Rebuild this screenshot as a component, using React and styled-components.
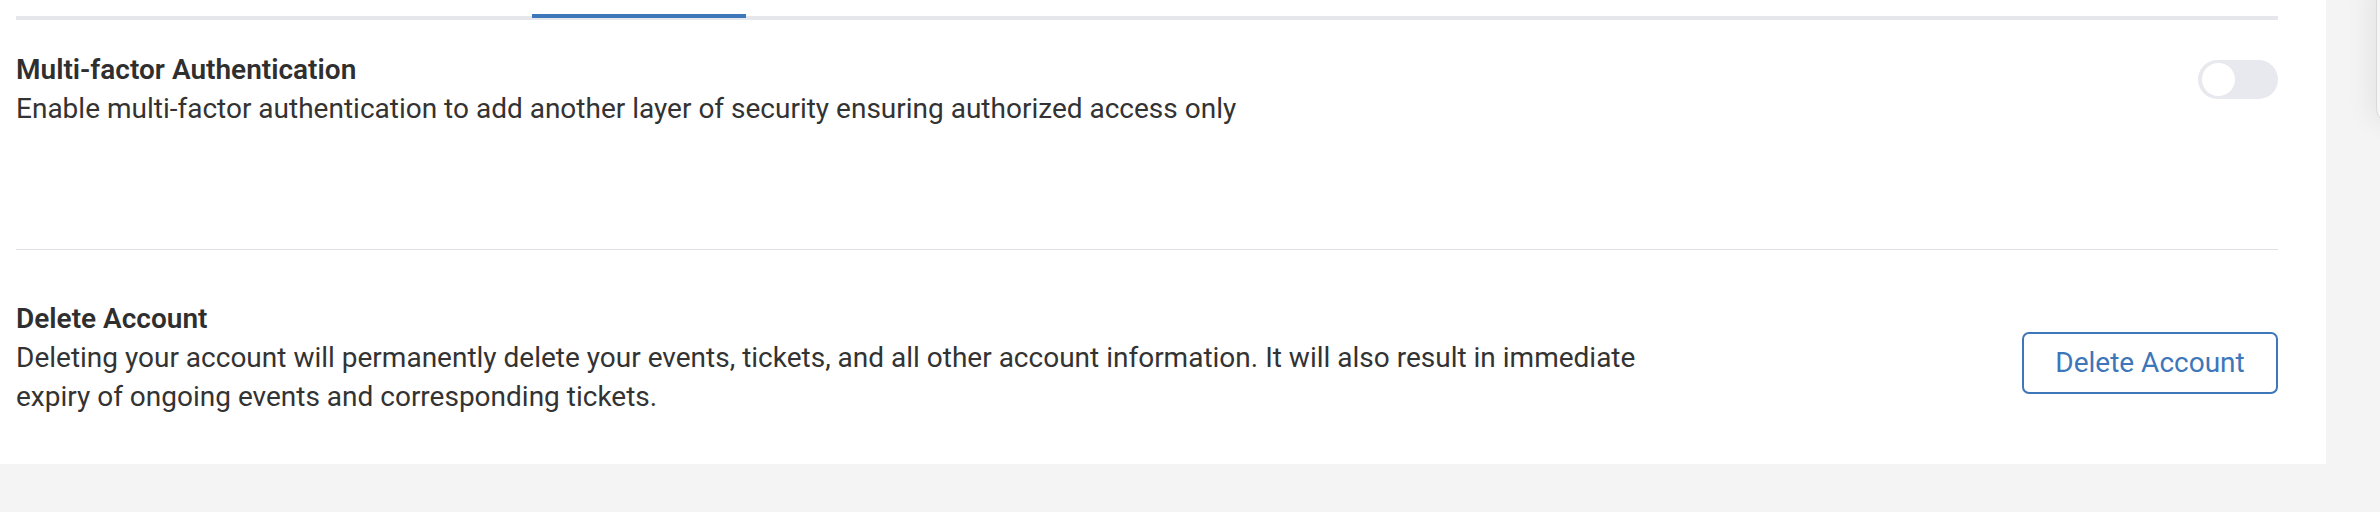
import React, { useState } from "react";
import styled, { createGlobalStyle } from "styled-components";

const GlobalStyle = createGlobalStyle`
  html, body {
    margin: 0;
    padding: 0;
    background: #f4f4f4;
    font-family: Roboto, "Liberation Sans", Arial, sans-serif;
    color: #333333;
  }
  #root {
    position: relative;
    height: 512px;
    overflow: hidden;
  }
`;

const Card = styled.div`
  width: 2326px;
  box-sizing: border-box;
  padding: 0 48px 48px 16px;
  background: #ffffff;
`;

const TabBar = styled.div`
  display: flex;
  height: 16px;
  border-bottom: 4px solid #e6e7ec;
`;

const Tab = styled.div`
  position: relative;
  width: ${(p) => p.$width}px;
  &::after {
    content: "";
    display: ${(p) => (p.$active ? "block" : "none")};
    position: absolute;
    left: 0;
    right: 0;
    bottom: -2px;
    height: 4px;
    background: #3d76b9;
  }
`;

const Section = styled.div`
  display: flex;
  justify-content: space-between;
  align-items: ${(p) => p.$align || "flex-start"};
  padding: ${(p) => p.$padding};
  border-bottom: ${(p) => (p.$divider ? "1px solid #dde0e5" : "none")};
`;

const TextBlock = styled.div`
  max-width: ${(p) => p.$maxWidth || "none"};
`;

const Title = styled.div`
  font-size: 28px;
  line-height: 39px;
  font-weight: 600;
  color: #2f2f2f;
`;

const Description = styled.div`
  font-size: 28px;
  line-height: 39px;
  font-weight: 400;
  color: #333333;
`;

const Toggle = styled.button`
  position: relative;
  flex: none;
  width: 80px;
  height: 39px;
  margin-top: 10px;
  padding: 0;
  border: none;
  border-radius: 20px;
  background: ${(p) => (p.$on ? "#3d76b9" : "#e8e9ee")};
  cursor: pointer;
  &::after {
    content: "";
    position: absolute;
    top: 3px;
    left: ${(p) => (p.$on ? "44px" : "4px")};
    width: 33px;
    height: 33px;
    border-radius: 50%;
    background: #ffffff;
  }
`;

const OutlineButton = styled.button`
  flex: none;
  box-sizing: border-box;
  width: 256px;
  height: 62px;
  margin-top: 10px;
  border: 2px solid #3d76b9;
  border-radius: 7px;
  background: #ffffff;
  color: #3d76b9;
  font-family: Roboto, "Liberation Sans", Arial, sans-serif;
  font-size: 28px;
  font-weight: 400;
  cursor: pointer;
`;

const SidePanelEdge = styled.div`
  position: absolute;
  top: -20px;
  left: 2376px;
  width: 40px;
  height: 143px;
  box-sizing: border-box;
  border: 1px solid #d9d9d9;
  border-radius: 14px;
  background: #f6f6f6;
  box-shadow: -8px 0 24px rgba(0, 0, 0, 0.06);
`;

export default function App() {
  const [mfa, setMfa] = useState(false);

  return (
    <>
      <GlobalStyle />
      <Card>
        <TabBar>
          <Tab $width={516} />
          <Tab $width={214} $active />
        </TabBar>

        <Section $padding="30px 0 121px" $divider>
          <TextBlock>
            <Title>Multi-factor Authentication</Title>
            <Description>
              Enable multi-factor authentication to add another layer of
              security ensuring authorized access only
            </Description>
          </TextBlock>
          <Toggle $on={mfa} onClick={() => setMfa(!mfa)} aria-label="Toggle MFA" />
        </Section>

        <Section $padding="49px 0 0" $align="center">
          <TextBlock $maxWidth="1650px">
            <Title>Delete Account</Title>
            <Description>
              Deleting your account will permanently delete your events,
              tickets, and all other account information. It will also result
              in immediate expiry of ongoing events and corresponding tickets.
            </Description>
          </TextBlock>
          <OutlineButton>Delete Account</OutlineButton>
        </Section>
      </Card>
      <SidePanelEdge />
    </>
  );
}
